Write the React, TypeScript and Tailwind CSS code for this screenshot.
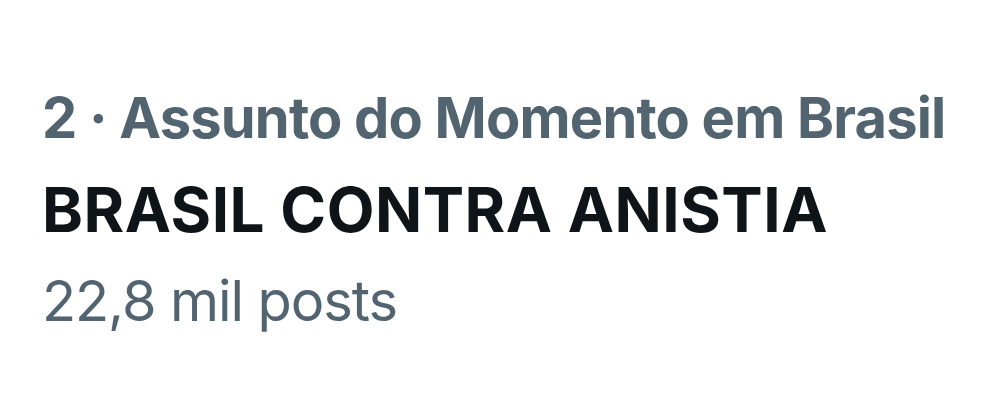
export default function App() {
  return (
    <div className="w-[995px] h-[404px] bg-white pl-[42px] pt-[73px]" style={{ fontFamily: "Inter, 'Liberation Sans', sans-serif" }}>
      <div className="text-[56px] leading-[90px] font-bold tracking-[-0.8px] text-[#536471] whitespace-nowrap">2 · Assunto do Momento em Brasil</div>
      <div className="text-[62px] leading-[93px] font-bold tracking-[0.5px] text-[#0f1419] whitespace-nowrap">BRASIL CONTRA ANISTIA</div>
      <div className="text-[56px] leading-[90px] font-normal tracking-[-1.1px] text-[#536471] whitespace-nowrap">22,8 mil posts</div>
    </div>
  );
}
